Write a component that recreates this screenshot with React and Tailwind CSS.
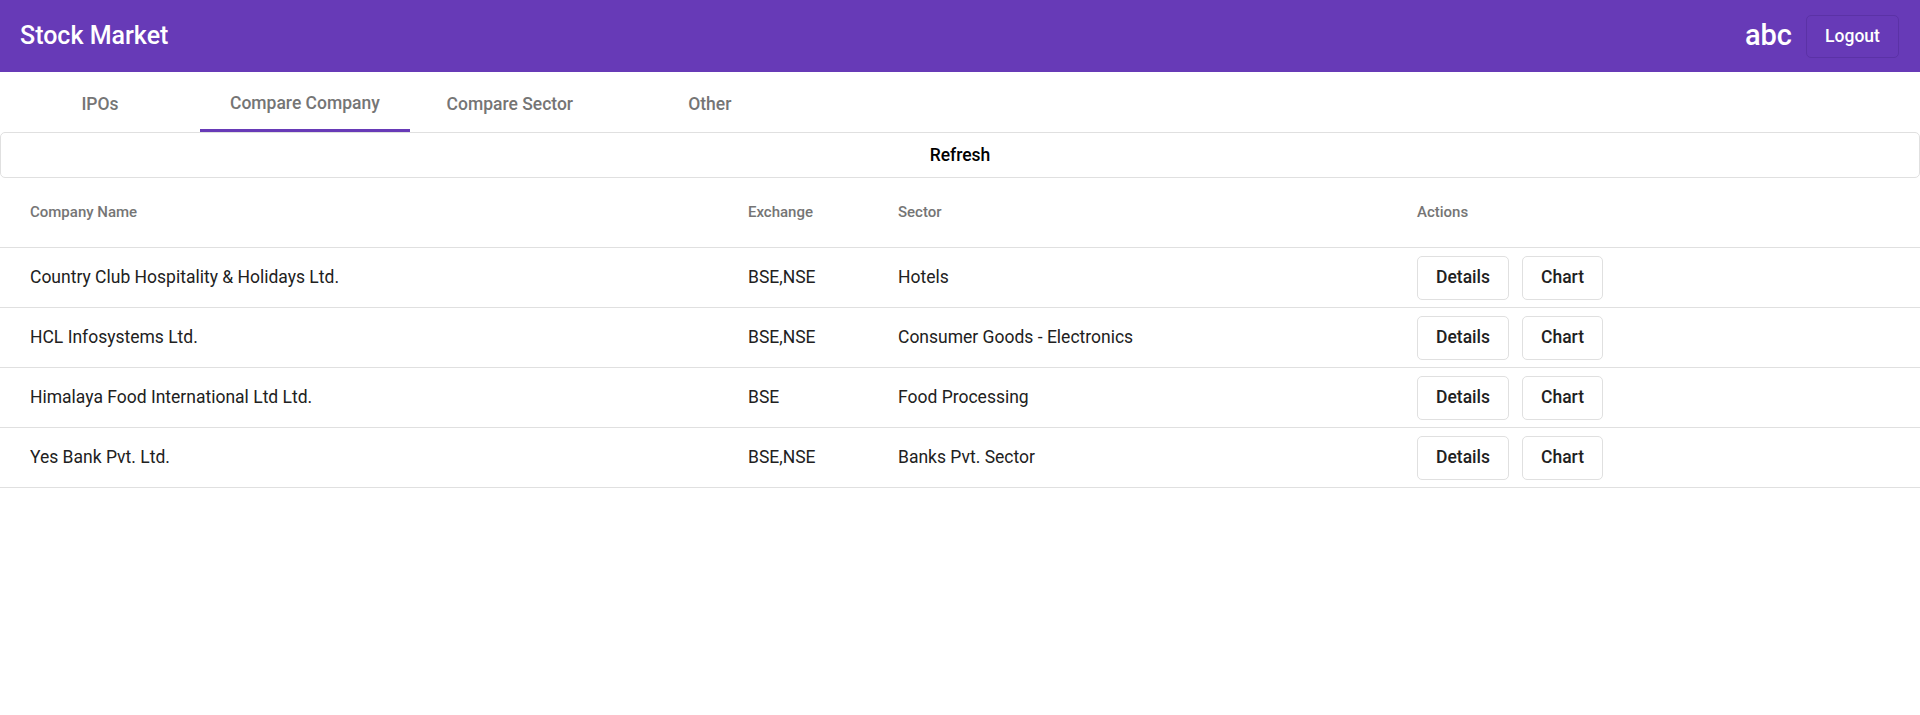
import React from 'react';

const rows = [
  { name: 'Country Club Hospitality & Holidays Ltd.', exchange: 'BSE,NSE', sector: 'Hotels' },
  { name: 'HCL Infosystems Ltd.', exchange: 'BSE,NSE', sector: 'Consumer Goods - Electronics' },
  { name: 'Himalaya Food International Ltd Ltd.', exchange: 'BSE', sector: 'Food Processing' },
  { name: 'Yes Bank Pvt. Ltd.', exchange: 'BSE,NSE', sector: 'Banks Pvt. Sector' },
];

const tabs = ['IPOs', 'Compare Company', 'Compare Sector', 'Other'];

function ActionButton({ children }) {
  return (
    <button className="h-[44px] px-[18px] border border-[#e0e0e0] rounded-[5px] bg-white text-[17.5px] font-medium text-[#212121]">
      {children}
    </button>
  );
}

export default function App() {
  const active = 1;

  return (
    <div className="min-h-[715px] bg-white font-['Roboto',sans-serif]">
      <header className="h-[72px] bg-[#673ab7] text-white flex items-center justify-between pl-5 pr-[21px]">
        <span className="text-[25px] font-medium">Stock Market</span>
        <div className="flex items-center gap-[14px]">
          <span className="text-[29px] font-medium">abc</span>
          <button className="h-[43px] w-[93px] border border-[#5b32a6] rounded-[5px] text-[17.5px] font-medium">
            Logout
          </button>
        </div>
      </header>

      <nav className="h-[60px] flex">
        {tabs.map((t, i) => (
          <div
            key={t}
            className={`min-w-[200px] px-[30px] pt-[5px] flex items-center justify-center text-[17.5px] font-medium text-[#757575] ${
              i === active ? 'border-b-[3px] border-[#673ab7]' : ''
            }`}
          >
            {t}
          </div>
        ))}
      </nav>

      <button className="w-full h-[46px] border border-[#e0e0e0] rounded-[5px] text-[17.5px] font-medium text-black">
        Refresh
      </button>

      <div className="grid grid-cols-[748px_150px_519px_1fr]">
        <div className="h-[70px] pl-[30px] flex items-center text-[15px] font-medium text-[#757575] border-b border-[#e0e0e0]">
          Company Name
        </div>
        <div className="h-[70px] flex items-center text-[15px] font-medium text-[#757575] border-b border-[#e0e0e0]">
          Exchange
        </div>
        <div className="h-[70px] flex items-center text-[15px] font-medium text-[#757575] border-b border-[#e0e0e0]">
          Sector
        </div>
        <div className="h-[70px] flex items-center text-[15px] font-medium text-[#757575] border-b border-[#e0e0e0]">
          Actions
        </div>

        {rows.map((r) => (
          <React.Fragment key={r.name}>
            <div className="h-[60px] pl-[30px] flex items-center text-[17.5px] text-[#212121] border-b border-[#e0e0e0]">
              {r.name}
            </div>
            <div className="h-[60px] flex items-center text-[17.5px] text-[#212121] border-b border-[#e0e0e0]">
              {r.exchange}
            </div>
            <div className="h-[60px] flex items-center text-[17.5px] text-[#212121] border-b border-[#e0e0e0]">
              {r.sector}
            </div>
            <div className="h-[60px] flex items-center gap-[13px] border-b border-[#e0e0e0]">
              <ActionButton>Details</ActionButton>
              <ActionButton>Chart</ActionButton>
            </div>
          </React.Fragment>
        ))}
      </div>
    </div>
  );
}
